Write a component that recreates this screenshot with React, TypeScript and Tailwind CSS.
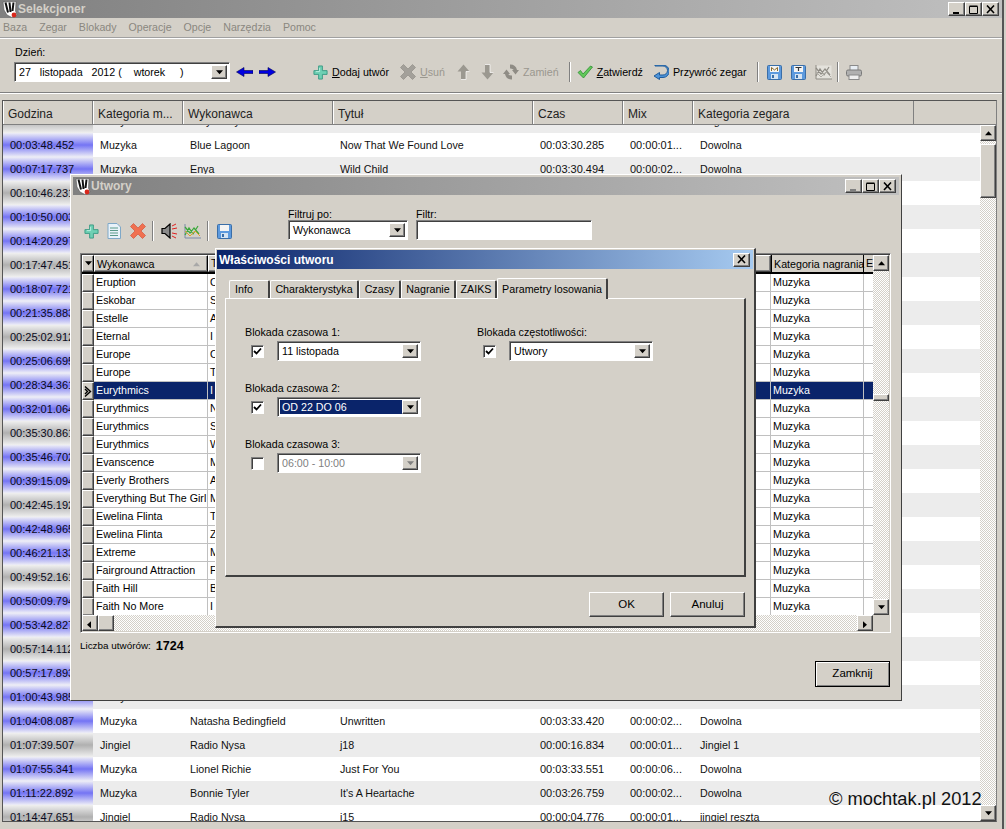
import React from "react";

const raised = "border border-t-white border-l-white border-r-[#404040] border-b-[#404040] shadow-[inset_-1px_-1px_0_#808080]";
const sunken = "border border-t-[#808080] border-l-[#808080] border-r-white border-b-white shadow-[inset_1px_1px_0_#404040]";
const hatch = "bg-[image:repeating-conic-gradient(#d4d0c8_0%_25%,#ffffff_0%_50%)] bg-[length:2px_2px]";

function Logo() {
  return (
    <svg width="16" height="17" viewBox="0 0 16 17" className="shrink-0">
      <path d="M1 1 L14 0.5 L13.5 10 L15 14 L10 16.5 L5 14 L2 9 Z" fill="#fff" stroke="#555" strokeWidth="0.6" />
      <path d="M3.5 1.5 L6 11.5 M7.5 1.5 L8.5 11 M11.5 1.5 L10.5 10" stroke="#111" strokeWidth="2" fill="none" />
      <circle cx="12" cy="14" r="2.4" fill="#d8281c" />
    </svg>
  );
}

function Tri({ dir, color = "#000" }: { dir: "up" | "down" | "left" | "right"; color?: string }) {
  const pts = { up: "1,5 8,5 4.5,1", down: "1,1 8,1 4.5,5", left: "5,1 5,8 1,4.5", right: "2,1 2,8 6,4.5" }[dir];
  return (
    <svg width="9" height="9" viewBox="0 0 9 6.5" className="block">
      <polygon points={pts} fill={color} />
    </svg>
  );
}

function CapBtn({ kind, dim }: { kind: "min" | "max" | "close"; dim?: boolean }) {
  const c = dim ? "#808080" : "#000";
  return (
    <div className={`w-[17px] h-[14px] flex items-center justify-center bg-[#d4d0c8] ${raised}`}>
      <svg width="10" height="9" viewBox="0 0 10 9">
        {kind === "min" && <rect x="1" y="7" width="6" height="2" fill={c} />}
        {kind === "max" && <path d="M0.5 1.5 H8.5 V8.5 H0.5 Z M0.5 1 H8.5" fill="none" stroke={c} strokeWidth="1" />}
        {kind === "close" && <path d="M1 0.5 L8 8 M8 0.5 L1 8" stroke={c} strokeWidth="1.6" />}
      </svg>
    </div>
  );
}

function Plus() {
  return (
    <svg width="15" height="15" viewBox="0 0 16 16" className="shrink-0">
      <path d="M6 1 H10 V6 H15 V10 H10 V15 H6 V10 H1 V6 H6 Z" fill="#6fd0b4" stroke="#3a9a84" strokeWidth="1" />
      <path d="M7 3 V7 H3" fill="none" stroke="#b8f0e0" strokeWidth="1" />
    </svg>
  );
}

function Cross({ color, edge }: { color: string; edge: string }) {
  return (
    <svg width="16" height="16" viewBox="0 0 16 16" className="shrink-0">
      <path d="M0.5 3.5 L3.5 0.5 L8 5 L12.5 0.5 L15.5 3.5 L11 8 L15.5 12.5 L12.5 15.5 L8 11 L3.5 15.5 L0.5 12.5 L5 8 Z" fill={color} stroke={edge} strokeWidth="0.6" />
    </svg>
  );
}

function BlueArrow({ right }: { right?: boolean }) {
  return (
    <svg width="17" height="10" viewBox="0 0 17 10" className="shrink-0">
      <g transform={right ? "" : "translate(17,0) scale(-1,1)"}>
        <path d="M0 3.5 H9 V0.5 L16.5 5 L9 9.5 V6.5 H0 Z" fill="#0000e0" stroke="#000050" strokeWidth="0.6" />
      </g>
    </svg>
  );
}

function VArrow({ down }: { down?: boolean }) {
  return (
    <svg width="13" height="16" viewBox="0 0 13 16" className="shrink-0">
      <g transform={down ? "translate(0,16) scale(1,-1)" : ""}>
        <path d="M6.5 0.5 L12.5 7.5 H9 V15.5 H4 V7.5 H0.5 Z" fill="#9b9890" />
        <path d="M4 15.5 H9 V7.5 H12.5" fill="none" stroke="#fff" strokeWidth="0.7" />
      </g>
    </svg>
  );
}

function Swap() {
  return (
    <svg width="16" height="16" viewBox="0 0 16 16" className="shrink-0">
      <path d="M7 0.5 A7 7 0 0 1 14 6 H16 L12.5 10.5 L9 6 H10.8 A4 4 0 0 0 7 4.5 Z" fill="#8f8c85" />
      <path d="M9 15.5 A7 7 0 0 1 2 10 H0 L3.5 5.5 L7 10 H5.2 A4 4 0 0 0 9 11.5 Z" fill="#8f8c85" />
    </svg>
  );
}

function Check() {
  return (
    <svg width="16" height="14" viewBox="0 0 16 14" className="shrink-0">
      <path d="M1 7.5 L3.5 5.5 L6 9 L13.5 1 L15.5 2 L6.5 13 Z" fill="#62c85a" stroke="#2e8f34" strokeWidth="0.8" />
    </svg>
  );
}

function Restore() {
  return (
    <svg width="16" height="15" viewBox="0 0 16 15" className="shrink-0">
      <path d="M2 1 H10 A4.5 4.5 0 0 1 10 10 H6.5 V7.5 L1 11 L6.5 14.5 V12.5 H10 A6 6 0 0 0 10 0 H2 Z" fill="#4d93d8" stroke="#1f5c9c" strokeWidth="1" />
    </svg>
  );
}

function Disk({ letter, dim }: { letter?: string; dim?: boolean }) {
  return (
    <svg width="15" height="15" viewBox="0 0 15 15" className="shrink-0">
      <rect x="0.5" y="0.5" width="14" height="14" rx="1" fill={dim ? "#a9c6e4" : "#5d9ade"} stroke="#3a6ea8" />
      <rect x="3" y="1" width="9" height="6" fill="#f4f4f4" />
      <rect x="4" y="9" width="7" height="5" fill="#d6e4f2" />
      <rect x="5" y="10" width="2" height="3" fill="#3a6ea8" />
      {letter === "M" && <path d="M4.5 6 V2.5 L7.5 5 L10.5 2.5 V6" fill="none" stroke="#8a6a2a" strokeWidth="1" />}
      {letter === "T" && <path d="M4.5 2.5 H10.5 M7.5 2.5 V6" fill="none" stroke="#333" strokeWidth="1.2" />}
    </svg>
  );
}

function Chart({ color }: { color?: boolean }) {
  return (
    <svg width="17" height="15" viewBox="0 0 17 15" className="shrink-0">
      <rect x="1" y="0.5" width="15.5" height="13.5" fill={color ? "none" : "#e4e2dc"} />
      <path d="M1 0 V14 H17" fill="none" stroke={color ? "#7a8aa8" : "#8f8c85"} strokeWidth="1" />
      <path d="M1 11 L5 4 L9 10 L14 2 M1 3 L6 9 L10 4 L15 10" fill="none" stroke={color ? "#3aa83a" : "#8f8c85"} strokeWidth="1.2" />
      <path d="M1 7 L6 12 L11 7 L16 12" fill="none" stroke={color ? "#e0a030" : "#aeaba4"} strokeWidth="1" />
    </svg>
  );
}

function Printer() {
  return (
    <svg width="16" height="15" viewBox="0 0 16 15" className="shrink-0">
      <rect x="4" y="0.5" width="8" height="5" fill="#e8eef4" stroke="#8a8a8a" />
      <rect x="0.5" y="5" width="15" height="6" rx="1.5" fill="#b0b0b0" stroke="#7a7a7a" />
      <rect x="3" y="10" width="10" height="4.5" fill="#eeeeee" stroke="#8a8a8a" />
    </svg>
  );
}

function DocIcon() {
  return (
    <svg width="14" height="16" viewBox="0 0 14 16" className="shrink-0">
      <path d="M1 0.5 H10 L13.5 4 V15.5 H1 Z" fill="#e8f2fa" stroke="#7fa8c8" />
      <path d="M3 5 H11 M3 7.5 H11 M3 10 H11 M3 12.5 H11" stroke="#5a9a8a" strokeWidth="1" />
    </svg>
  );
}

function Speaker() {
  return (
    <svg width="17" height="16" viewBox="0 0 17 16" className="shrink-0">
      <path d="M1 5.5 H4 L9 1 V15 L4 10.5 H1 Z" fill="#8a8a8a" stroke="#000" strokeWidth="1.2" />
      <path d="M11 3 L15 1 M11 6 L16 5 M11 10 L16 11 M11 13 L15 15" stroke="#e02020" strokeWidth="1" />
    </svg>
  );
}

function Sep({ className = "" }: { className?: string }) {
  return <div className={`w-[2px] h-[20px] border-l border-l-[#808080] border-r border-r-white shrink-0 ${className}`} />;
}

function Combo({ value, w, selected, disabled }: { value: string; w: string; selected?: boolean; disabled?: boolean }) {
  return (
    <div className={`${w} h-[20px] bg-white flex items-stretch p-[2px] shrink-0 ${sunken}`}>
      <div className={`flex-1 min-w-0 flex items-center pl-[2px] whitespace-pre overflow-hidden ${selected ? "bg-[#0a246a] text-white" : disabled ? "text-[#808080]" : "text-black"}`}>{value}</div>
      <div className={`w-[16px] flex items-center justify-center bg-[#d4d0c8] ${raised}`}>
        <Tri dir="down" color={disabled ? "#808080" : "#000"} />
      </div>
    </div>
  );
}

function Check3D({ on }: { on?: boolean }) {
  return (
    <div className={`w-[13px] h-[13px] bg-white flex items-center justify-center shrink-0 ${sunken}`}>
      {on && (
        <svg width="9" height="9" viewBox="0 0 9 9">
          <path d="M1 4 L3.5 6.5 L8 1.5" fill="none" stroke="#000" strokeWidth="1.8" />
        </svg>
      )}
    </div>
  );
}

const mainRows: [string, boolean, string, string, string, string, string, string][] = [
  ["00:03:48.452", true, "Muzyka", "Blue Lagoon", "Now That We Found Love", "00:03:30.285", "00:00:01...", "Dowolna"],
  ["00:07:17.737", true, "Muzyka", "Enya", "Wild Child", "00:03:30.494", "00:00:02...", "Dowolna"],
  ["00:10:46.231", false, "", "", "", "", "", ""],
  ["00:10:50.003", true, "", "", "", "", "", ""],
  ["00:14:20.297", true, "", "", "", "", "", ""],
  ["00:17:47.451", false, "", "", "", "", "", ""],
  ["00:18:07.721", true, "", "", "", "", "", ""],
  ["00:21:35.883", true, "", "", "", "", "", ""],
  ["00:25:02.912", false, "", "", "", "", "", ""],
  ["00:25:06.695", true, "", "", "", "", "", ""],
  ["00:28:34.361", true, "", "", "", "", "", ""],
  ["00:32:01.064", true, "", "", "", "", "", ""],
  ["00:35:30.861", false, "", "", "", "", "", ""],
  ["00:35:46.702", true, "", "", "", "", "", ""],
  ["00:39:15.094", true, "", "", "", "", "", ""],
  ["00:42:45.192", false, "", "", "", "", "", ""],
  ["00:42:48.965", true, "", "", "", "", "", ""],
  ["00:46:21.133", true, "", "", "", "", "", ""],
  ["00:49:52.161", false, "", "", "", "", "", ""],
  ["00:50:09.794", true, "", "", "", "", "", ""],
  ["00:53:42.827", true, "", "", "", "", "", ""],
  ["00:57:14.112", false, "", "", "", "", "", ""],
  ["00:57:17.893", true, "", "", "", "", "", ""],
  ["01:00:43.985", true, "Muzyka", "", "", "", "", ""],
  ["01:04:08.087", true, "Muzyka", "Natasha Bedingfield", "Unwritten", "00:03:33.420", "00:00:02...", "Dowolna"],
  ["01:07:39.507", false, "Jingiel", "Radio Nysa", "j18", "00:00:16.834", "00:00:01...", "Jingiel 1"],
  ["01:07:55.341", true, "Muzyka", "Lionel Richie", "Just For You", "00:03:33.551", "00:00:06...", "Dowolna"],
  ["01:11:22.892", true, "Muzyka", "Bonnie Tyler", "It's A Heartache", "00:03:26.759", "00:00:02...", "Dowolna"],
  ["01:14:47.651", false, "Jingiel", "Radio Nysa", "j15", "00:00:04.776", "00:00:01...", "jingiel reszta"],
];

const songs: [string, string][] = [
  ["Eruption", "O"], ["Eskobar", "S"], ["Estelle", "A"], ["Eternal", "I"], ["Europe", "O"], ["Europe", "T"],
  ["Eurythmics", "I"], ["Eurythmics", "N"], ["Eurythmics", "S"], ["Eurythmics", "W"], ["Evanscence", "M"],
  ["Everly Brothers", "A"], ["Everything But The Girl", "M"], ["Ewelina Flinta", "T"], ["Ewelina Flinta", "Z"],
  ["Extreme", "M"], ["Fairground Attraction", "F"], ["Faith Hill", "B"], ["Faith No More", "I"],
];

function HeadCell({ w, children }: { w: string; children: React.ReactNode }) {
  return <div className={`${w} h-full shrink-0 flex items-center pt-[3px] pl-[4px] border-r border-r-[#808080] border-l border-l-white overflow-hidden whitespace-nowrap`}>{children}</div>;
}

function MainRow({ r, i }: { r: (typeof mainRows)[number]; i: number }) {
  const blue = r[1];
  return (
    <div className={`h-[24px] flex items-center shrink-0 ${i % 2 === 0 ? "bg-white" : "bg-[#ececec]"}`}>
      <div className={`w-[90px] h-full shrink-0 flex items-center pl-[7px] text-[#0a0a20] ${blue ? "bg-[linear-gradient(to_bottom,#eeeef6,#7474f4_50%,#eeeef6)]" : "bg-[linear-gradient(to_bottom,#f0f0f0,#b0b0b0_50%,#f0f0f0)]"}`}>{r[0]}</div>
      <div className="w-[90px] shrink-0 pl-[7px] text-[10.7px]">{r[2]}</div>
      <div className="w-[150px] shrink-0 pl-[7px] text-[10.7px]">{r[3]}</div>
      <div className="w-[200px] shrink-0 pl-[7px] text-[10.7px]">{r[4]}</div>
      <div className="w-[90px] shrink-0 pl-[7px]">{r[5]}</div>
      <div className="w-[70px] shrink-0 pl-[7px]">{r[6]}</div>
      <div className="flex-1 pl-[7px] text-[10.7px]">{r[7]}</div>
    </div>
  );
}

function ScrollBtn({ dir, className = "" }: { dir: "up" | "down" | "left" | "right"; className?: string }) {
  return (
    <div className={`w-[16px] h-[16px] flex items-center justify-center bg-[#d4d0c8] shrink-0 ${raised} ${className}`}>
      <Tri dir={dir} />
    </div>
  );
}

function TitleBar({ title, dimMin }: { title: string; dimMin?: boolean }) {
  return (
    <div className="h-[18px] shrink-0 flex items-center pl-[2px] pr-[3px] bg-[linear-gradient(to_right,#808080,#c0c0c0)]">
      <Logo />
      <span className="font-bold text-[12px] text-[#d4d0c8]">{title}</span>
      <div className="ml-auto flex">
        <CapBtn kind="min" dim={dimMin} />
        <CapBtn kind="max" />
        <CapBtn kind="close" />
      </div>
    </div>
  );
}

function Tab({ w, children, active, left }: { w: string; children: React.ReactNode; active?: boolean; left?: boolean }) {
  return (
    <div className={`${w} shrink-0 flex items-center ${left ? "justify-start pl-[5px]" : "justify-center"} border-l border-l-white border-t border-t-white border-r-2 border-r-[#404040] rounded-t-[2px] ${active ? "h-[21px] z-10 -mb-[1px] bg-[#d4d0c8]" : "h-[18px]"}`}>
      {children}
    </div>
  );
}

function Block({ label, w, value, on, selected, disabled }: { label: string; w: string; value: string; on?: boolean; selected?: boolean; disabled?: boolean }) {
  return (
    <div className="flex flex-col h-[56px]">
      <div className="h-[18px] flex items-center">{label}</div>
      <div className="flex items-center pl-[6px] gap-[13px]">
        <Check3D on={on} />
        <Combo w={w} value={value} selected={selected} disabled={disabled} />
      </div>
    </div>
  );
}

export default function App() {
  return (
    <div className="relative w-[1006px] h-[829px] overflow-hidden bg-[#d4d0c8] text-[10.7px] text-black font-['Liberation_Sans',sans-serif]">
      {/* Main window */}
      <div className="w-[1004px] h-full flex flex-col border-r-2 border-r-[#555]">
        <TitleBar title="Selekcjoner" />
        <div className="h-[19px] shrink-0 flex items-center pl-[3px] gap-[12px] text-[10.6px] text-[#8a877f]">
          <span>Baza</span><span>Zegar</span><span>Blokady</span><span>Operacje</span><span>Opcje</span><span>Narzędzia</span><span>Pomoc</span>
        </div>
        <div className="h-[2px] shrink-0 bg-white border-t border-t-[#a0a0a0]" />
        <div className="h-[53px] shrink-0 relative flex items-end pl-[14px] pb-[10px]">
          <div className="absolute left-[15px] top-[5px]">Dzień:</div>
          <Combo w="w-[216px]" value="27   listopada   2012 (    wtorek     )" />
          <div className="flex items-center h-[20px]">
            <div className="ml-[6px]"><BlueArrow /></div>
            <div className="ml-[6px]"><BlueArrow right /></div>
            <div className="ml-[37px]"><Plus /></div>
            <span className="ml-[4px]"><u>D</u>odaj utwór</span>
            <div className="ml-[11px]"><Cross color="#a3a09a" edge="#8a877f" /></div>
            <span className="ml-[4px] text-[#9a978f]"><u>U</u>suń</span>
            <div className="ml-[12px]"><VArrow /></div>
            <div className="ml-[11px]"><VArrow down /></div>
            <div className="ml-[9px]"><Swap /></div>
            <span className="ml-[4px] text-[#9a978f]">Zamień</span>
            <Sep className="ml-[10px]" />
            <div className="ml-[6px]"><Check /></div>
            <span className="ml-[4px]"><u>Z</u>atwierdź</span>
            <div className="ml-[10px]"><Restore /></div>
            <span className="ml-[4px]">Przywróć zegar</span>
            <Sep className="ml-[10px]" />
            <div className="ml-[8px]"><Disk letter="M" /></div>
            <div className="ml-[9px]"><Disk letter="T" /></div>
            <div className="ml-[9px]"><Chart /></div>
            <Sep className="ml-[5px]" />
            <div className="ml-[7px]"><Printer /></div>
          </div>
        </div>
        <div className="h-[2px] shrink-0 bg-white border-t border-t-[#808080]" />
        {/* Grid */}
        <div className="mt-[6px] ml-[2px] mr-[5px] h-[722px] shrink-0 flex flex-col border border-[#555] border-r-[#808080] overflow-hidden">
          <div className="h-[24px] shrink-0 flex border-b border-b-[#808080] text-[12px] text-[#222]">
            <HeadCell w="w-[90px]">Godzina</HeadCell>
            <HeadCell w="w-[90px]">Kategoria m...</HeadCell>
            <HeadCell w="w-[150px]">Wykonawca</HeadCell>
            <HeadCell w="w-[200px]">Tytuł</HeadCell>
            <HeadCell w="w-[90px]">Czas</HeadCell>
            <HeadCell w="w-[70px]">Mix</HeadCell>
            <HeadCell w="w-[221px]">Kategoria zegara</HeadCell>
          </div>
          <div className="flex-1 min-h-0 flex">
            <div className="flex-1 min-w-0 overflow-hidden text-[11px] text-[#111]">
              <div className="-mt-[16px]">
                <MainRow i={1} r={["00:00:19.113", false, "Muzyka", "Katy Perry", "You", "", "", "Jingiel"]} />
                {mainRows.map((r, i) => <MainRow key={i} r={r} i={i} />)}
              </div>
            </div>
            <div className={`w-[16px] shrink-0 flex flex-col ${hatch}`}>
              <ScrollBtn dir="up" />
              <div className={`mt-[3px] h-[54px] w-[16px] bg-[#d4d0c8] ${raised}`} />
              <ScrollBtn dir="down" className="mt-auto" />
            </div>
          </div>
        </div>
      </div>

      {/* Utwory window */}
      <div className="absolute left-[70px] top-[174px] w-[832px] h-[527px] bg-[#d4d0c8] flex flex-col p-[2px] border border-t-white border-l-white border-r-[#404040] border-b-[#404040]">
        <TitleBar title="Utwory" dimMin />
        <div className="h-[58px] shrink-0 relative">
          <div className="absolute left-[215px] top-[11px]">Filtruj po:</div>
          <div className="absolute left-[343px] top-[11px]">Filtr:</div>
          <div className="absolute left-[215px] top-[25px]"><Combo w="w-[120px]" value="Wykonawca" /></div>
          <div className={`absolute left-[343px] top-[25px] w-[176px] h-[20px] bg-white ${sunken}`} />
          <div className="absolute left-[11px] top-[26px] flex items-center h-[20px]">
            <Plus />
            <div className="ml-[8px]"><DocIcon /></div>
            <div className="ml-[9px]"><Cross color="#f07050" edge="#d04830" /></div>
            <Sep className="ml-[6px]" />
            <div className="ml-[7px]"><Speaker /></div>
            <div className="ml-[6px]"><Chart color /></div>
            <Sep className="ml-[6px]" />
            <div className="ml-[8px]"><Disk /></div>
          </div>
        </div>
        {/* inner grid */}
        <div className={`mx-[7px] w-[811px] h-[380px] shrink-0 flex flex-col overflow-hidden ${sunken} p-[1px]`}>
          <div className="flex-1 min-h-0 flex">
            <div className="flex-1 min-w-0 flex flex-col overflow-hidden">
              <div className="h-[19px] shrink-0 flex border-b-2 border-b-black">
                <div className={`w-[12px] shrink-0 flex items-center justify-center bg-[#d4d0c8] border-r border-r-black ${raised}`}><Tri dir="down" /></div>
                <div className={`w-[114px] shrink-0 flex items-center pt-[1px] pl-[2px] pr-[6px] justify-between border-r-black ${raised}`}>Wykonawca<Tri dir="up" color="#a8a8a8" /></div>
                <div className={`w-[563px] shrink-0 flex items-center pl-[2px] ${raised}`}>T</div>
                <div className="w-[93px] shrink-0 flex items-center pt-[1px] pl-[2px] border-r border-r-black border-l border-l-black whitespace-nowrap">Kategoria nagrania</div>
                <div className="flex-1 pl-[2px] flex items-center overflow-hidden">E</div>
              </div>
              {songs.map(([a, b], i) => {
                const sel = i === 6;
                return (
                  <div key={i} className="h-[18px] shrink-0 flex">
                    <div className={`w-[12px] shrink-0 flex items-center justify-center bg-[#d4d0c8] ${raised}`}>
                      {sel && (
                        <svg width="8" height="11" viewBox="0 0 8 11">
                          <path d="M1 0.5 L6.5 5.5 L1 10.5 M1 3 L3.5 5.5 L1 8" fill="none" stroke="#000" strokeWidth="1.4" />
                        </svg>
                      )}
                    </div>
                    <div className={`w-[114px] shrink-0 pl-[2px] flex items-center border-r border-b whitespace-nowrap overflow-hidden ${sel ? "bg-[#0a246a] text-white border-[#c0c0c0]" : "bg-white border-[#c0c0c0]"}`}>{a}</div>
                    <div className={`w-[563px] shrink-0 pl-[2px] flex items-center border-r border-b border-[#c0c0c0] ${sel ? "bg-[#0a246a] text-white" : "bg-white"}`}>{b}</div>
                    <div className={`w-[93px] shrink-0 pl-[2px] flex items-center border-r border-b border-[#c0c0c0] ${sel ? "bg-[#0a246a] text-white" : "bg-white"}`}>Muzyka</div>
                    <div className={`flex-1 border-b border-[#c0c0c0] ${sel ? "bg-[#0a246a]" : "bg-white"}`} />
                  </div>
                );
              })}
            </div>
            <div className={`w-[16px] shrink-0 flex flex-col ${hatch}`}>
              <ScrollBtn dir="up" />
              <div className={`mt-[123px] h-[7px] w-[16px] bg-[#d4d0c8] ${raised}`} />
              <ScrollBtn dir="down" className="mt-auto" />
            </div>
          </div>
          <div className="h-[16px] shrink-0 flex">
            <div className={`flex-1 flex ${hatch}`}>
              <ScrollBtn dir="left" />
              <div className={`w-[16px] h-[16px] bg-[#d4d0c8] ${raised}`} />
              <ScrollBtn dir="right" className="ml-auto" />
            </div>
            <div className="w-[16px] bg-[#d4d0c8]" />
          </div>
        </div>
        <div className="ml-[7px] mt-[5px] h-[16px] flex items-center gap-[5px] shrink-0">
          <span className="text-[9.9px]">Liczba utwórów:</span><b className="text-[12.5px]">1724</b>
        </div>
        <div className="flex justify-end pr-[9px] mt-[7px]">
          <div className="w-[75px] h-[26px] flex items-center justify-center border border-black bg-[#d4d0c8] shadow-[inset_1px_1px_0_#fff,inset_-1px_-1px_0_#808080] text-[11.5px]">Zamknij</div>
        </div>
      </div>

      {/* Dialog */}
      <div className="absolute left-[215px] top-[248px] w-[541px] h-[380px] bg-[#d4d0c8] flex flex-col p-[1px] border border-t-white border-l-white border-r-[#404040] border-b-[#404040] border-r-2 border-b-2">
        <div className="h-[19px] shrink-0 flex items-center pl-[2px] pr-[3px] bg-[linear-gradient(to_right,#0a246a,#a6caf0)]">
          <span className="text-white font-bold text-[12px]">Właściwości utworu</span>
          <div className="ml-auto"><CapBtn kind="close" /></div>
        </div>
        <div className="ml-[12px] mt-[8px] flex items-end h-[21px] shrink-0">
          <Tab w="w-[41px]" left>Info</Tab>
          <Tab w="w-[89px]">Charakterystyka</Tab>
          <Tab w="w-[42px]">Czasy</Tab>
          <Tab w="w-[55px]">Nagranie</Tab>
          <Tab w="w-[41px]">ZAIKS</Tab>
          <Tab w="w-[111px]" active>Parametry losowania</Tab>
        </div>
        <div className="ml-[8px] w-[521px] h-[279px] shrink-0 pt-[24px] pl-[19px] flex border-t border-t-white border-l border-l-white border-r-2 border-r-[#404040] border-b-2 border-b-[#404040]">
          <div className="w-[232px] flex flex-col">
            <Block label="Blokada czasowa 1:" w="w-[144px]" value="11 listopada" on />
            <Block label="Blokada czasowa 2:" w="w-[144px]" value="OD 22 DO 06" on selected />
            <Block label="Blokada czasowa 3:" w="w-[144px]" value="06:00 - 10:00" disabled />
          </div>
          <Block label="Blokada częstotliwości:" w="w-[144px]" value="Utwory" on />
        </div>
        <div className="mt-[15px] ml-[372px] flex gap-[6px] shrink-0">
          <div className={`w-[75px] h-[25px] flex items-center justify-center text-[11.5px] bg-[#d4d0c8] ${raised}`}>OK</div>
          <div className={`w-[75px] h-[25px] flex items-center justify-center text-[11.5px] bg-[#d4d0c8] ${raised}`}>Anuluj</div>
        </div>
      </div>

      {/* Watermark */}
      <div className="absolute left-[829px] top-[788px] text-[18.3px] leading-[22px] text-[#111] whitespace-nowrap">© mochtak.pl 2012</div>
    </div>
  );
}
